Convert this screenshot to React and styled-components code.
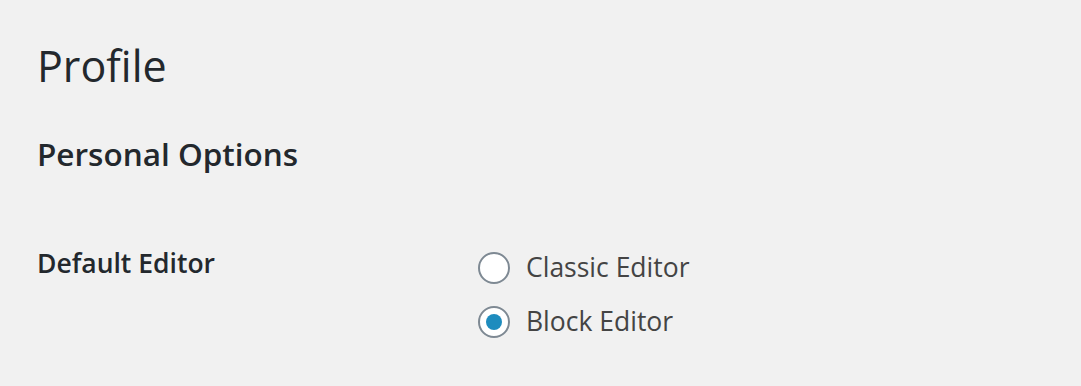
import React, { useState } from "react";
import styled, { createGlobalStyle } from "styled-components";

const GlobalStyle = createGlobalStyle`
  html, body {
    margin: 0;
    padding: 0;
    background: #f1f1f1;
  }
  body {
    font-family: "Open Sans", "Noto Sans", sans-serif;
    color: #23282d;
  }
`;

const Wrap = styled.div`
  padding: 36px 20px 0 37px;
  min-height: 386px;
  box-sizing: border-box;
`;

const Title = styled.h1`
  margin: 0;
  font-size: 43px;
  font-weight: 400;
  line-height: 60px;
  color: #23282d;
`;

const SectionTitle = styled.h2`
  margin: 36px 0 0;
  font-size: 31.5px;
  font-weight: 600;
  line-height: 44px;
  color: #23282d;
`;

const FormRow = styled.div`
  display: flex;
  margin-top: 67px;
`;

const RowLabel = styled.div`
  width: 400px;
  padding-right: 20px;
  font-size: 26.5px;
  font-weight: 600;
  line-height: 40px;
  color: #23282d;
`;

const Field = styled.fieldset`
  border: 0;
  margin: 0;
  padding: 4px 0 0 21px;
  display: flex;
  flex-direction: column;
  gap: 14px;
`;

const Option = styled.label`
  display: flex;
  align-items: center;
  gap: 16px;
  font-size: 26.5px;
  line-height: 40px;
  color: #444;
  cursor: pointer;
`;

const Radio = styled.span`
  position: relative;
  width: 32px;
  height: 32px;
  margin-top: 2px;
  box-sizing: border-box;
  border-radius: 50%;
  border: 2px solid #7e8993;
  background: #fff;
  flex-shrink: 0;

  &::after {
    content: "";
    display: ${(p) => (p.checked ? "block" : "none")};
    position: absolute;
    left: 50%;
    top: 50%;
    width: 16px;
    height: 16px;
    margin: -8px 0 0 -8px;
    border-radius: 50%;
    background: #1e8cbe;
  }
`;

const editors = [
  { id: "classic", name: "Classic Editor" },
  { id: "block", name: "Block Editor" }
];

export default function App() {
  const [editor, setEditor] = useState("block");
  return (
    <Wrap>
      <GlobalStyle />
      <Title>Profile</Title>
      <SectionTitle>Personal Options</SectionTitle>
      <FormRow>
        <RowLabel>Default Editor</RowLabel>
        <Field>
          {editors.map(({ id, name }) => (
            <Option key={id} onClick={() => setEditor(id)}>
              <Radio checked={editor === id} />
              {name}
            </Option>
          ))}
        </Field>
      </FormRow>
    </Wrap>
  );
}
